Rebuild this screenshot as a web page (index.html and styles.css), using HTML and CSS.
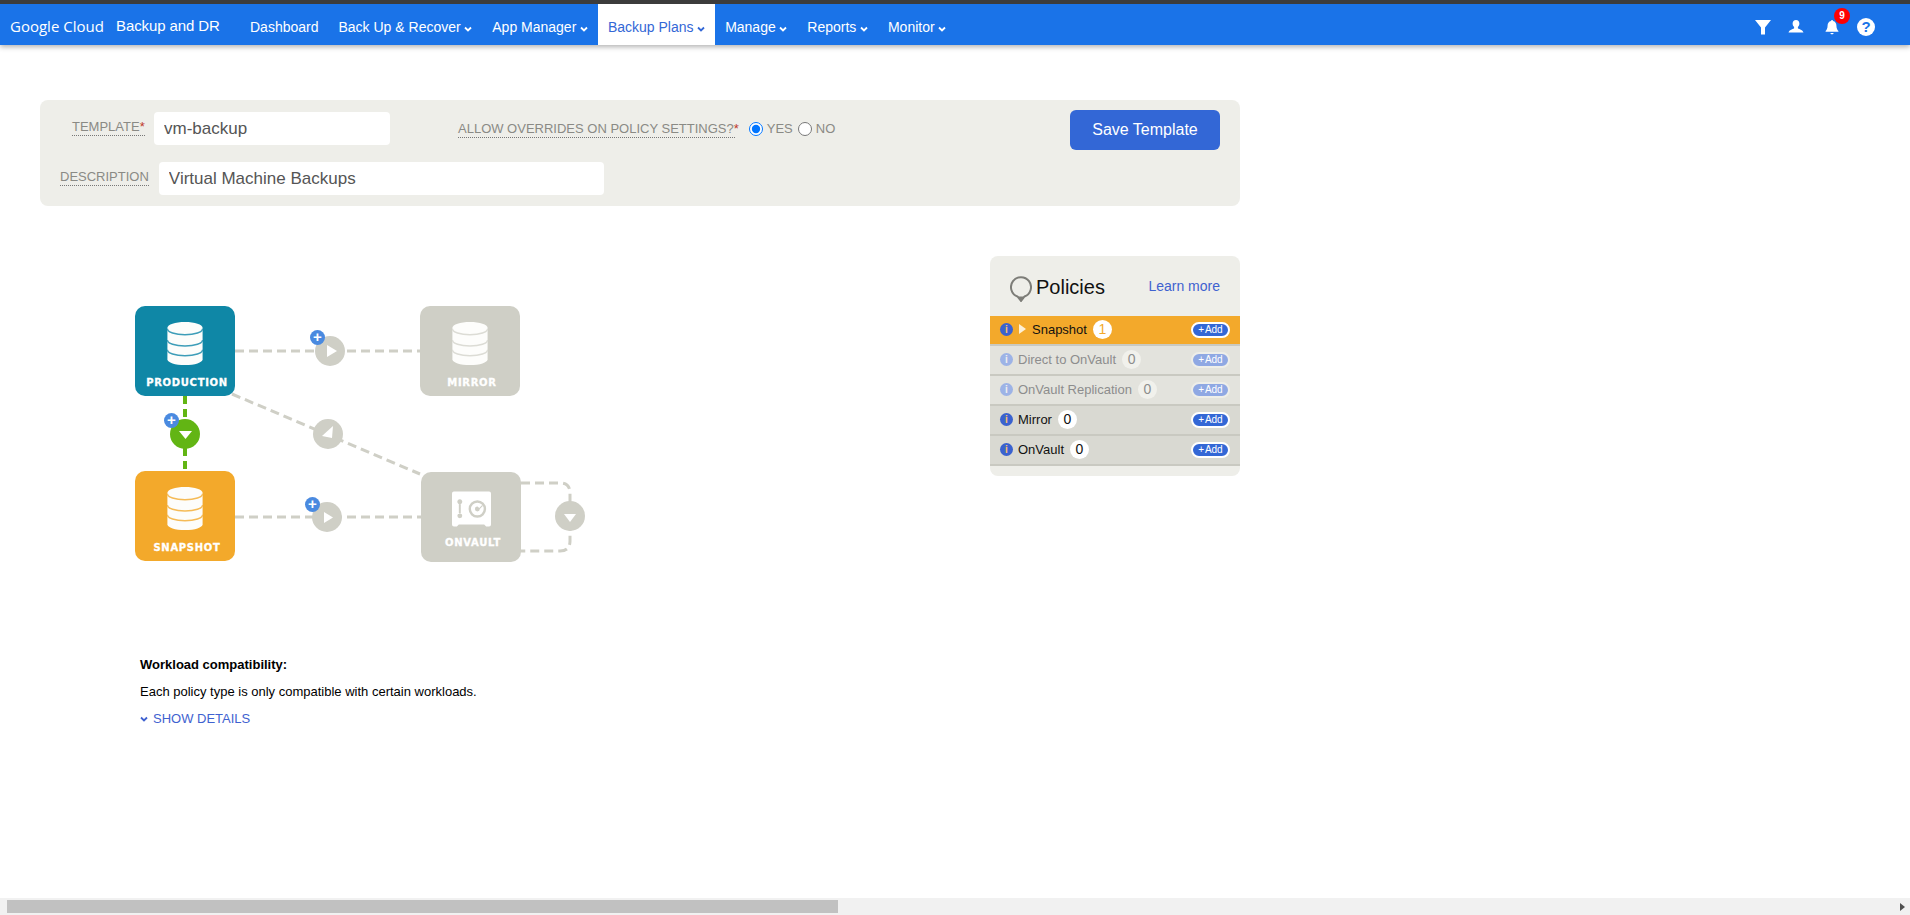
FILE: index.html
```html
<!DOCTYPE html>
<html>
<head>
    <title>Backup Plans</title>
    <link rel="stylesheet" href="styles.css">
</head>
<body>
    <header class="topbar">
        <div class="brand">Google Cloud</div>
        <div class="product">Backup and DR</div>
        <nav class="nav">
            <a>Dashboard</a>
            <a>Back Up &amp; Recover <svg class="caret" viewBox="0 0 8 6"><path d="M1 1.5l3 3 3-3"/></svg></a>
            <a>App Manager <svg class="caret" viewBox="0 0 8 6"><path d="M1 1.5l3 3 3-3"/></svg></a>
            <a class="active">Backup Plans <svg class="caret" viewBox="0 0 8 6"><path d="M1 1.5l3 3 3-3"/></svg></a>
            <a>Manage <svg class="caret" viewBox="0 0 8 6"><path d="M1 1.5l3 3 3-3"/></svg></a>
            <a>Reports <svg class="caret" viewBox="0 0 8 6"><path d="M1 1.5l3 3 3-3"/></svg></a>
            <a>Monitor <svg class="caret" viewBox="0 0 8 6"><path d="M1 1.5l3 3 3-3"/></svg></a>
        </nav>
        <div class="tools">
            <svg class="tool" viewBox="0 0 16 16"><path d="M0 1h16L10 8.500V15.500H6V8.500z"/></svg>
            <svg class="tool" viewBox="0 0 16 16"><path d="M8 1c2.200 0 3.400 1.600 3.400 3.600 0 1.500-.6 2.800-1.500 3.500v1.200c0 .5 4.600 1.100 5.600 4.200H.5c1-3.100 5.600-3.700 5.600-4.200V8.100C5.200 7.400 4.600 6.100 4.600 4.600 4.600 2.600 5.800 1 8 1z"/></svg>
            <span class="bell">
                <svg class="tool" viewBox="0 0 16 16"><path d="M8 1c.6 0 1 .4 1 .9 2.300.5 3.400 2.300 3.400 4.600 0 3.300 1.100 4.500 2 5.500v.8H1.600V12c.9-1 2-2.200 2-5.500C3.600 4.200 4.700 2.400 7 1.900 7 1.400 7.400 1 8 1zM6.400 14h3.200c0 .8-.7 1.300-1.600 1.300S6.400 14.800 6.400 14z"/></svg>
                <span class="bell-count">9</span>
            </span>
            <svg class="tool help" viewBox="0 0 18 18"><circle cx="9" cy="9" r="9" fill="#fff"/><text x="9" y="14" text-anchor="middle" class="help-mark">?</text></svg>
        </div>
    </header>

    <main class="page">
        <form class="template-bar">
            <div class="template-fields">
                <div class="field-row">
                    <label class="field-label tip tip-template">TEMPLATE<span class="req">*</span></label>
                    <input class="text-input input-template" type="text" value="vm-backup">
                    <label class="field-label tip overrides">ALLOW OVERRIDES ON POLICY SETTINGS?<span class="req">*</span></label>
                    <label class="radio radio-yes"><input type="radio" name="overrides" checked> YES</label>
                    <label class="radio"><input type="radio" name="overrides"> NO</label>
                </div>
                <div class="field-row">
                    <label class="field-label tip tip-desc">DESCRIPTION</label>
                    <input class="text-input input-desc" type="text" value="Virtual Machine Backups">
                </div>
            </div>
            <button class="save-btn" type="button">Save Template</button>
        </form>

        <div class="workspace">
            <section class="left-col">
                <div class="diagram">
                    <svg class="links" viewBox="0 0 500 300" width="500" height="300">
                        <path class="link" d="M100 45H285"/>
                        <path class="link" d="M97 88L285 168"/>
                        <path class="link" d="M100 211H286"/>
                        <path class="link" d="M386 177h39q10 0 10 10v48q0 10-10 10h-39"/>
                        <path class="link link-green" d="M50 90V165"/>
                        <circle class="hub" cx="195" cy="45" r="15"/>
                        <path class="hub-arrow" d="M192 39l10 6-10 6z"/>
                        <circle class="hub" cx="193" cy="128" r="15"/>
                        <path class="hub-arrow" d="M198 120l-11 10 10 2z"/>
                        <circle class="hub" cx="192" cy="211" r="15"/>
                        <path class="hub-arrow" d="M189 206l9 5.500-9 5.500z"/>
                        <circle class="hub" cx="435" cy="210" r="15"/>
                        <path class="hub-arrow" d="M429 208h12l-6 8z"/>
                        <circle class="hub hub-green" cx="50" cy="128" r="15"/>
                        <path class="hub-arrow" d="M44 125h13l-6.500 8z"/>
                    </svg>

                    <div class="node node-production">
                        <svg class="db" viewBox="0 0 36 44"><path class="db-body" d="M0 6C0 2.500 8 0 18 0s18 2.500 18 6v32c0 3.500-8 6-18 6S0 41.500 0 38z"/><path class="db-lines" d="M0 7c0 3.500 8 6 18 6s18-2.500 18-6M0 18.500c0 3.500 8 6 18 6s18-2.500 18-6M0 28.500c0 3.500 8 6 18 6s18-2.500 18-6"/></svg>
                        <span class="node-label">PRODUCTION</span>
                    </div>
                    <div class="node node-mirror">
                        <svg class="db" viewBox="0 0 36 44"><path class="db-body" d="M0 6C0 2.500 8 0 18 0s18 2.500 18 6v32c0 3.500-8 6-18 6S0 41.500 0 38z"/><path class="db-lines" d="M0 7c0 3.500 8 6 18 6s18-2.500 18-6M0 18.500c0 3.500 8 6 18 6s18-2.500 18-6M0 28.500c0 3.500 8 6 18 6s18-2.500 18-6"/></svg>
                        <span class="node-label">MIRROR</span>
                    </div>
                    <div class="node node-snapshot">
                        <svg class="db" viewBox="0 0 36 44"><path class="db-body" d="M0 6C0 2.500 8 0 18 0s18 2.500 18 6v32c0 3.500-8 6-18 6S0 41.500 0 38z"/><path class="db-lines" d="M0 7c0 3.500 8 6 18 6s18-2.500 18-6M0 18.500c0 3.500 8 6 18 6s18-2.500 18-6M0 28.500c0 3.500 8 6 18 6s18-2.500 18-6"/></svg>
                        <span class="node-label">SNAPSHOT</span>
                    </div>
                    <div class="node node-onvault">
                        <svg class="vault" viewBox="0 0 40 36"><path fill-rule="evenodd" d="M2 0h36q2 0 2 2v32q0 2-2 2h-3l-2-2H7l-2 2H2q-2 0-2-2V2q0-2 2-2zM8 8a2.500 2.500 0 1 0 .01 0zM7 13v10h2V13zM8 22.500a2.500 2.500 0 1 0 .01 5 2.500 2.500 0 0 0 0-5zM26 9a9 9 0 1 0 .01 18 9 9 0 0 0 0-18zM26 11.500a6.500 6.500 0 1 1-.01 13 6.500 6.500 0 0 1 0-13zM26 15.500a2.500 2.500 0 1 0 2.500 2.500l3-3-.8-.8-3 3a2.500 2.500 0 0 0-1.700-1.700z"/></svg>
                        <span class="node-label">ONVAULT</span>
                    </div>

                    <span class="plus plus-mirror">+</span>
                    <span class="plus plus-green">+</span>
                    <span class="plus plus-snapshot">+</span>
                </div>

                <div class="compat">
                    <h4>Workload compatibility:</h4>
                    <p>Each policy type is only compatible with certain workloads.</p>
                    <a class="show-details"><svg class="caret" viewBox="0 0 8 6"><path d="M1 1.500l3 3 3-3"/></svg> SHOW DETAILS</a>
                </div>
            </section>

            <aside class="policies">
                <div class="policies-head">
                    <svg class="pin" viewBox="0 0 22 26"><path d="M11 25L7.500 20.500A10 10 0 1 1 14.500 20.500z" fill="#eeeee9" stroke="#7d7d78" stroke-width="2"/><path d="M7.500 20.500h7L11 25z" fill="#7d7d78"/></svg>
                    <h3>Policies</h3>
                    <a class="learn">Learn more</a>
                </div>
                <div class="policy policy-active">
                    <span class="info">i</span><span class="policy-arrow"></span><span class="policy-name">Snapshot</span><span class="count">1</span><span class="add">+ Add</span>
                </div>
                <div class="policy policy-off">
                    <span class="info">i</span><span class="policy-name">Direct to OnVault</span><span class="count">0</span><span class="add">+ Add</span>
                </div>
                <div class="policy policy-off">
                    <span class="info">i</span><span class="policy-name">OnVault Replication</span><span class="count">0</span><span class="add">+ Add</span>
                </div>
                <div class="policy">
                    <span class="info">i</span><span class="policy-name">Mirror</span><span class="count">0</span><span class="add">+ Add</span>
                </div>
                <div class="policy">
                    <span class="info">i</span><span class="policy-name">OnVault</span><span class="count">0</span><span class="add">+ Add</span>
                </div>
            </aside>
        </div>
    </main>

    <div class="hscroll">
        <span class="hscroll-thumb"></span>
        <span class="hscroll-arrow"></span>
    </div>
</body>
</html>
```

FILE: styles.css
```css
* {
    box-sizing: border-box;
}

html, body {
    height: 100%;
}

body {
    margin: 0;
    font-family: 'Liberation Sans', Arial, sans-serif;
    background: white;
    color: #000;
    display: flex;
    flex-direction: column;
    overflow: hidden;
}

/* top bar */
.topbar {
    height: 45px;
    flex: none;
    background: #1a73e8;
    border-top: 4px solid #3c3c3c;
    box-shadow: 0 2px 5px rgba(0,0,0,0.3);
    color: white;
    display: flex;
    align-items: center;
    padding-left: 10px;
}

.brand {
    font-family: 'Open Sans', sans-serif;
    font-size: 15px;
    width: 106px;
    padding-top: 2px;
}

.product {
    font-size: 15px;
    letter-spacing: -0.1px;
    width: 124px;
    padding-top: 2px;
}

.nav {
    display: flex;
    align-self: stretch;
}

.nav a {
    display: flex;
    align-items: center;
    gap: 3.6px;
    padding: 5px 10px 0;
    font-size: 14px;
    white-space: nowrap;
}

.nav a.active {
    background: white;
    color: #3367d6;
}

.caret {
    width: 8px;
    height: 6px;
    margin-top: 3px;
}

.caret path {
    fill: none;
    stroke: currentColor;
    stroke-width: 1.8;
}

.tools {
    margin-left: auto;
    margin-right: 35px;
    padding-top: 5px;
    display: flex;
    align-items: center;
    gap: 17px;
}

.tool {
    width: 16px;
    height: 16px;
    fill: white;
    display: block;
}

.tool.help {
    width: 18px;
    height: 18px;
}

.help-mark {
    font-size: 15px;
    font-weight: bold;
    fill: #1a73e8;
}

.bell {
    position: relative;
    margin-left: 3px;
}

.bell-count {
    position: absolute;
    top: -11px;
    left: 10px;
    width: 16px;
    height: 16px;
    border-radius: 50%;
    background: #f00;
    color: white;
    font-size: 10px;
    font-weight: bold;
    line-height: 16px;
    text-align: center;
}

/* page */
.page {
    flex: 1;
    padding: 55px 0 0 40px;
    width: 1240px;
}

.template-bar {
    height: 106px;
    background: #eeeee9;
    border-radius: 8px;
    display: flex;
    justify-content: space-between;
    padding: 10px 20px 0 0;
}

.template-fields {
    padding-top: 2px;
    display: flex;
    flex-direction: column;
    gap: 17px;
}

.field-row {
    display: flex;
    align-items: center;
}

.field-label {
    font-size: 13px;
    color: #8a8a85;
    white-space: nowrap;
}

.tip {
    border-bottom: 1px dotted #777;
    line-height: 16px;
    margin-bottom: 2px;
}

.req {
    color: #c0392b;
    font-size: 13px;
    margin-right: -4px;
}

.tip-template {
    margin-left: 32px;
    width: 73px;
}

.tip-desc {
    margin-left: 20px;
}

.text-input {
    height: 33px;
    border: none;
    border-radius: 4px;
    background: white;
    font-family: inherit;
    font-size: 17px;
    color: #555;
    padding: 0 10px;
    outline: none;
}

.input-template {
    width: 236px;
    margin-left: 9px;
}

.input-desc {
    width: 445px;
    margin-left: 10px;
}

.overrides {
    margin-left: 68px;
    margin-bottom: 0;
    margin-top: 1px;
}

.radio {
    display: flex;
    align-items: center;
    gap: 4px;
    font-size: 13px;
    color: #8a8a85;
    margin-left: 5px;
}

.radio-yes {
    margin-left: 14px;
}

.radio input {
    margin: 0;
    width: 14px;
    height: 14px;
}

.save-btn {
    width: 150px;
    height: 40px;
    background: #3367d6;
    color: white;
    border: none;
    border-radius: 6px;
    font-family: inherit;
    font-size: 16px;
    cursor: pointer;
}

.workspace {
    display: flex;
    justify-content: space-between;
    margin-top: 50px;
}

.left-col {
    width: 600px;
}

/* diagram */
.diagram {
    position: relative;
    width: 500px;
    height: 401px;
    margin-left: 95px;
}

.links {
    position: absolute;
    top: 50px;
    left: 0;
    overflow: visible;
}

.link {
    fill: none;
    stroke: #cfcfc6;
    stroke-width: 3;
    stroke-dasharray: 9 5;
}

.link-green {
    stroke: #62b514;
    stroke-width: 4;
    stroke-dasharray: 8 5;
}

.hub {
    fill: #cfcfc6;
}

.hub-green {
    fill: #62b514;
}

.hub-arrow {
    fill: white;
}

.node {
    position: absolute;
    width: 100px;
    height: 90px;
    border-radius: 10px;
    color: white;
    display: flex;
    flex-direction: column;
    align-items: center;
    padding-top: 16px;
}

.node-production {
    left: 0;
    top: 50px;
    background: #0f87a6;
}

.node-mirror {
    left: 285px;
    top: 50px;
    background: #cfcfc6;
}

.node-snapshot {
    left: 0;
    top: 215px;
    background: #f3a92b;
}

.node-onvault {
    left: 286px;
    top: 216px;
    background: #cfcfc6;
    padding-top: 19px;
}

.db {
    width: 36px;
    height: 43px;
    display: block;
    flex: none;
}

.db-body {
    fill: #fdfdfb;
}

.db-lines {
    fill: none;
    stroke-width: 1.5;
}

.node-production .db-lines {
    stroke: #3d9db8;
}

.node-mirror .db-lines {
    stroke: #dcdcd5;
}

.node-snapshot .db-lines {
    stroke: #f5bb57;
}

.vault {
    width: 39px;
    height: 36px;
    fill: white;
    display: block;
    flex: none;
}

.node-label {
    font-family: 'DejaVu Sans', sans-serif;
    font-weight: bold;
    font-size: 10px;
    letter-spacing: 0.7px;
    -webkit-text-stroke: 0.3px white;
    line-height: 12px;
    margin: 12px 0 0 4px;
    white-space: nowrap;
}

.node-onvault .node-label {
    margin-top: 10px;
}

.plus {
    position: absolute;
    width: 15px;
    height: 15px;
    border-radius: 50%;
    background: #4a8ae0;
    color: white;
    font-size: 15px;
    font-weight: bold;
    line-height: 14px;
    text-align: center;
}

.plus-mirror {
    left: 175px;
    top: 74px;
}

.plus-green {
    left: 29px;
    top: 157px;
}

.plus-snapshot {
    left: 170px;
    top: 241px;
}

/* compatibility note */
.compat {
    margin-left: 100px;
    font-size: 13px;
}

.compat h4 {
    margin: 0;
    font-size: 13px;
    line-height: 16px;
}

.compat p {
    margin: 11px 0 0;
    line-height: 16px;
}

.show-details {
    display: flex;
    align-items: center;
    gap: 5px;
    margin-top: 11px;
    line-height: 16px;
    color: #3f62d0;
}

.show-details .caret {
    margin-top: 0;
}

/* policies panel */
.policies {
    width: 250px;
    height: 220px;
    background: #eeeee9;
    border-radius: 8px;
    overflow: hidden;
}

.policies-head {
    height: 60px;
    display: flex;
    align-items: center;
    padding: 0 20px;
}

.pin {
    width: 22px;
    height: 26px;
    margin-top: 5px;
    flex: none;
}

.policies-head h3 {
    margin: 2px 0 0 4px;
    font-size: 20px;
    font-weight: normal;
    color: #111;
}

.learn {
    margin-left: auto;
    font-size: 14px;
    color: #3f62d0;
}

.policy {
    height: 30px;
    padding: 0 10px 2px;
    background: #d9d9d2;
    border-bottom: 2px solid #c9c9c1;
    display: flex;
    align-items: center;
    font-size: 13px;
    color: #111;
}

.policy-active {
    background: #f3a92b;
}

.policy-off {
    background: #e3e3dd;
    color: #8d8d8d;
}

.info {
    width: 13px;
    height: 13px;
    border-radius: 50%;
    background: #3a62cf;
    color: #f3c36d;
    font-size: 10px;
    font-weight: bold;
    line-height: 13px;
    text-align: center;
    margin-right: 5px;
    flex: none;
}

.policy-off .info {
    background: #9db3e6;
    color: #eee;
}

.policy-arrow {
    width: 0;
    height: 0;
    border-left: 7px solid #fdf0d5;
    border-top: 5px solid transparent;
    border-bottom: 5px solid transparent;
    margin: 0 6px 0 1px;
}

.count {
    width: 19px;
    height: 19px;
    border-radius: 50%;
    background: white;
    text-align: center;
    line-height: 19px;
    font-size: 14px;
    margin-left: 6px;
}

.policy-active .count {
    color: #f3a92b;
}

.policy-off .count {
    background: #f1f1ec;
}

.add {
    margin: 2px 0 0 auto;
    width: 39px;
    height: 16px;
    background: #3367d6;
    border: 2px solid white;
    border-radius: 8px;
    color: white;
    font-size: 10px;
    word-spacing: -1.5px;
    line-height: 12px;
    text-align: center;
}

.policy-off .add {
    background: #8fa8e3;
    border-color: #eeeee9;
}

/* fake page scrollbar */
.hscroll {
    height: 17px;
    flex: none;
    background: #f1f1f1;
    display: flex;
    align-items: center;
    justify-content: space-between;
    padding: 0 5px 0 7px;
}

.hscroll-thumb {
    width: 831px;
    height: 13px;
    background: #c1c1c1;
}

.hscroll-arrow {
    width: 0;
    height: 0;
    border-left: 5px solid #505050;
    border-top: 4px solid transparent;
    border-bottom: 4px solid transparent;
}
```
